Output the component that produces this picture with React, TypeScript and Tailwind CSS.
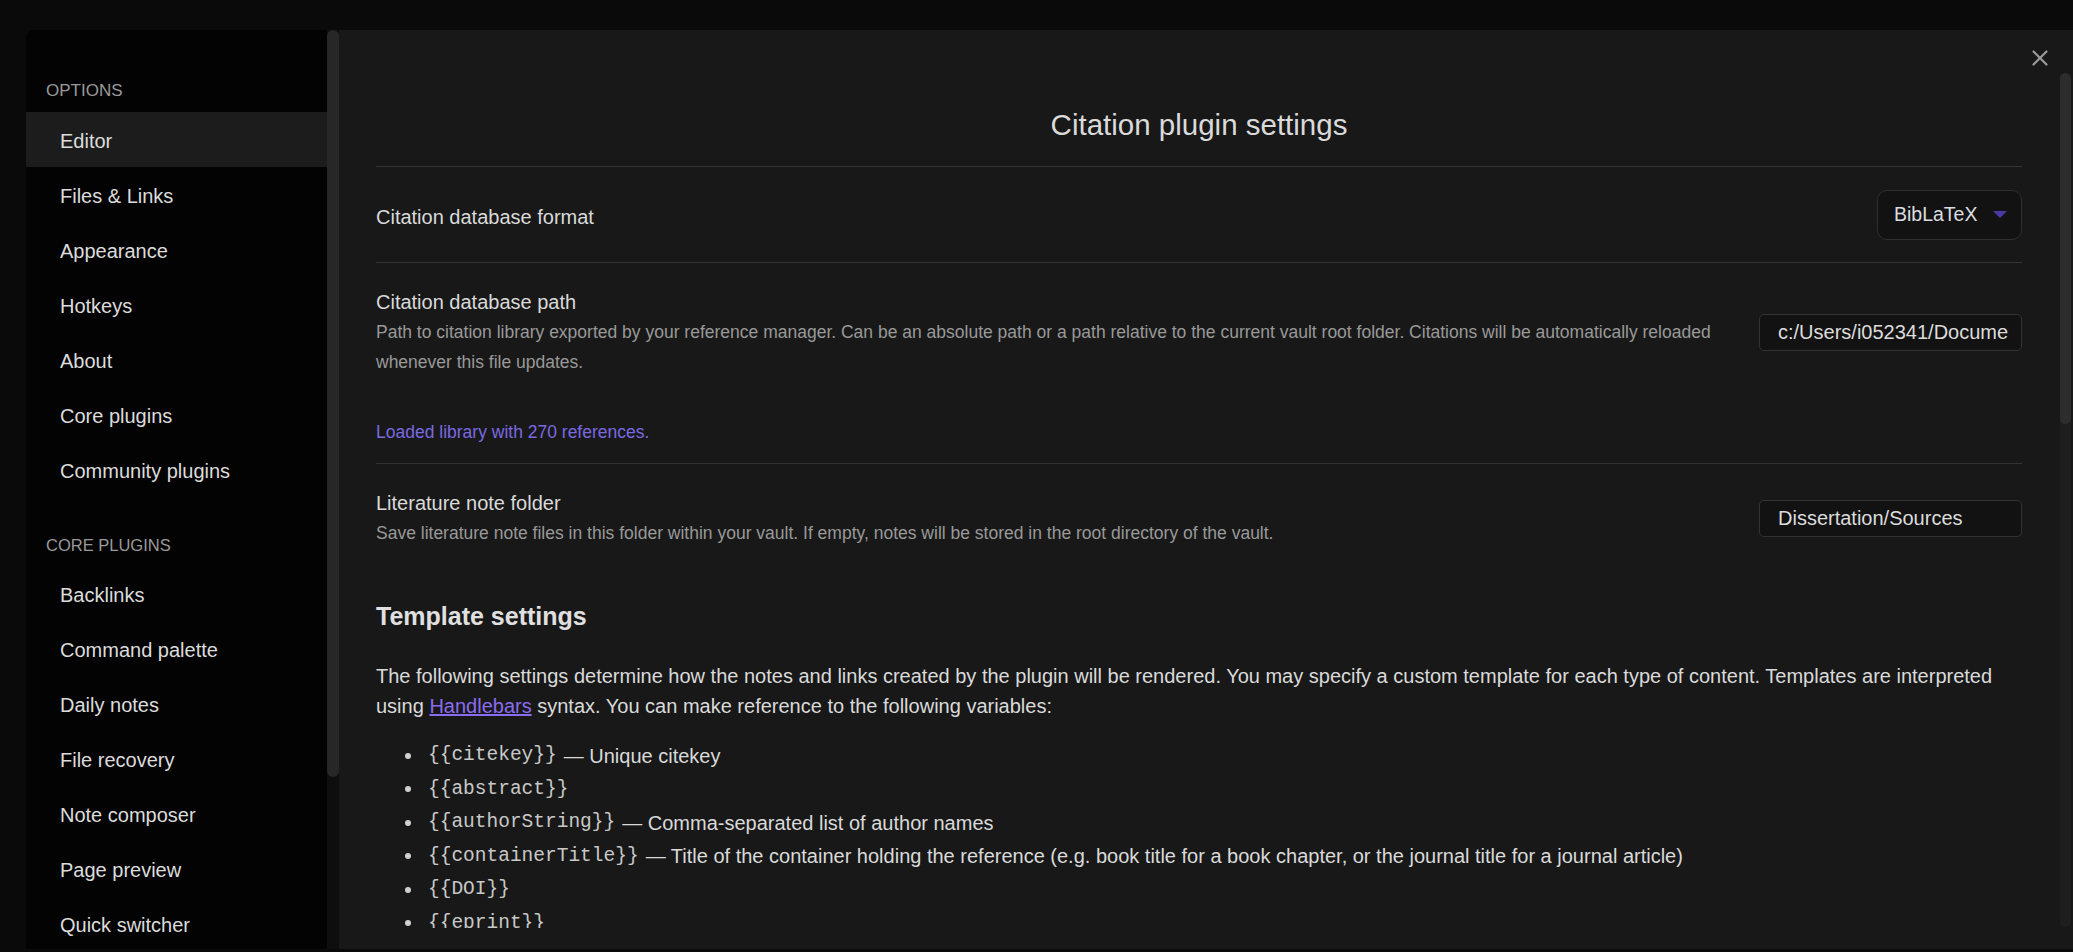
import React from "react";

const optionItems = [
  "Editor",
  "Files & Links",
  "Appearance",
  "Hotkeys",
  "About",
  "Core plugins",
  "Community plugins",
];

const coreItems = [
  "Backlinks",
  "Command palette",
  "Daily notes",
  "File recovery",
  "Note composer",
  "Page preview",
  "Quick switcher",
  "Search",
  "Slash commands",
];

const variables: { code: string; desc?: string }[] = [
  { code: "{{citekey}}", desc: "Unique citekey" },
  { code: "{{abstract}}" },
  { code: "{{authorString}}", desc: "Comma-separated list of author names" },
  {
    code: "{{containerTitle}}",
    desc: "Title of the container holding the reference (e.g. book title for a book chapter, or the journal title for a journal article)",
  },
  { code: "{{DOI}}" },
  { code: "{{eprint}}" },
  { code: "{{eprinttype}}" },
  { code: "{{eventPlace}}" },
  { code: "{{page}}" },
];

function CloseIcon() {
  return (
    <svg width="16" height="16" viewBox="0 0 16 16" fill="none">
      <path d="M1.5 1.5 L14.5 14.5 M14.5 1.5 L1.5 14.5" stroke="#9a9a9a" strokeWidth="2.2" strokeLinecap="round" />
    </svg>
  );
}

export default function App() {
  return (
    <div className="w-[2073px] h-[952px] bg-[#0a0a0a] overflow-hidden pl-[26px] pt-[30px] font-['Liberation_Sans',Arial,sans-serif]">
      <div className="flex h-[919px] w-[2047px] rounded-tl-[8px] overflow-hidden">
        {/* Sidebar */}
        <div className="flex w-[313px] shrink-0 bg-[#030303]">
          <div className="w-[301px] overflow-hidden flex flex-col">
            <div className="mt-[49px] mb-[9px] h-[24px] leading-[24px] pl-[20px] text-[17px] text-[#9a9a9a]">
              OPTIONS
            </div>
            {optionItems.map((item, i) => (
              <div
                key={item}
                className={
                  i === 0
                    ? "h-[55px] shrink-0 flex items-center pl-[34px] pt-[3px] text-[20px] text-[#dcdcdc] bg-[#1c1c1c]"
                    : "h-[55px] shrink-0 flex items-center pl-[34px] pt-[3px] text-[20px] text-[#dcdcdc]"
                }
              >
                {item}
              </div>
            ))}
            <div className="mt-[36px] mb-[10px] h-[24px] leading-[24px] pl-[20px] text-[16.5px] text-[#9a9a9a]">
              CORE PLUGINS
            </div>
            {coreItems.map((item) => (
              <div
                key={item}
                className="h-[55px] shrink-0 flex items-center pl-[34px] text-[20px] text-[#dcdcdc]"
              >
                {item}
              </div>
            ))}
          </div>
          <div className="w-[12px] bg-[#0e0e0e] flex flex-col">
            <div className="h-[747px] rounded-full bg-[#272727]" />
          </div>
        </div>

        {/* Content */}
        <div className="relative flex-1 flex bg-[#181818]">
          <button className="absolute right-[25px] top-[20px] w-[16px] h-[16px] flex items-center justify-center">
            <CloseIcon />
          </button>
          <div className="flex-1 flex flex-col">
            <div className="h-[898px] overflow-hidden pl-[37px] pr-[38px] pt-[78px]">
              <div className="text-center text-[29.5px] leading-[34px] text-[#dadada] pb-[24px] border-b border-[#333333]">
                Citation plugin settings
              </div>

              {/* Row 1 */}
              <div className="flex items-center pt-[23px] pb-[22px]">
                <div className="flex-1 mr-[20px] pt-[4px] text-[20px] leading-[30px] text-[#dadada]">
                  Citation database format
                </div>
                <div className="w-[145px] h-[50px] rounded-[10px] border border-[#2f2f2f] bg-[#121212] flex items-center pl-[16px] pr-[14px] justify-between">
                  <span className="text-[19.5px] text-[#dcdde0]">BibLaTeX</span>
                  <svg width="14" height="8" viewBox="0 0 14 8">
                    <path d="M0 0 H14 L7 7 Z" fill="#4b3aa6" />
                  </svg>
                </div>
              </div>

              {/* Row 2 */}
              <div className="border-t border-[#333333]">
                <div className="flex items-center pt-[24px]">
                  <div className="flex-1 mr-[20px]">
                    <div className="text-[20px] leading-[30px] text-[#dadada]">Citation database path</div>
                    <div className="text-[17.5px] leading-[30px] text-[#999999]">
                      Path to citation library exported by your reference manager. Can be an absolute path or a path relative to the current vault root folder. Citations will be automatically reloaded whenever this file updates.
                    </div>
                  </div>
                  <input
                    readOnly
                    value="c:/Users/i052341/Documents/Zotero/library.bib"
                    className="w-[263px] h-[37px] rounded-[5px] border border-[#333333] bg-[#121212] pl-[18px] pr-[12px] text-[20px] text-[#dcdcdc] outline-none"
                  />
                </div>
                <div className="pt-[40px] pb-[16px] text-[17.5px] leading-[30px] text-[#7a6ae0]">
                  Loaded library with 270 references.
                </div>
              </div>

              {/* Row 3 */}
              <div className="border-t border-[#333333] flex items-center pt-[24px]">
                <div className="flex-1 mr-[20px]">
                  <div className="text-[20px] leading-[30px] text-[#dadada]">Literature note folder</div>
                  <div className="text-[17.5px] leading-[30px] text-[#999999]">
                    Save literature note files in this folder within your vault. If empty, notes will be stored in the root directory of the vault.
                  </div>
                </div>
                <input
                  readOnly
                  value="Dissertation/Sources"
                  className="w-[263px] h-[37px] rounded-[5px] border border-[#333333] bg-[#121212] pl-[18px] pr-[12px] text-[20px] text-[#dcdcdc] outline-none"
                />
              </div>

              {/* Template settings */}
              <div className="mt-[53px] text-[25px] leading-[30px] font-bold text-[#e0e0e0]">
                Template settings
              </div>
              <p className="mt-[30px] text-[20px] leading-[30px] text-[#dadada]">
                The following settings determine how the notes and links created by the plugin will be rendered. You may specify a custom template for each type of content. Templates are interpreted using{" "}
                <a className="text-[#8a6cf0] underline">Handlebars</a> syntax. You can make reference to the following variables:
              </p>
              <ul className="mt-[18px]">
                {variables.map((v) => (
                  <li key={v.code} className="h-[33.5px] flex items-center text-[20px] text-[#dadada]">
                    <span className="w-[6px] h-[6px] rounded-full bg-[#d0d0d0] ml-[29px] mr-[17px] shrink-0" />
                    <span className="font-['Liberation_Mono',monospace] text-[#c8c8c8] text-[19.5px]">{v.code}</span>
                    {v.desc ? <span className="ml-[7px]">— {v.desc}</span> : null}
                  </li>
                ))}
              </ul>
            </div>
          </div>
          <div className="w-[13px] pt-[43px] pr-[2px] flex flex-col">
            <div className="h-[854px] rounded-full bg-[#1e1e1e] flex flex-col">
              <div className="h-[351px] rounded-full bg-[#2d2d2d]" />
            </div>
          </div>
        </div>
      </div>
    </div>
  );
}
